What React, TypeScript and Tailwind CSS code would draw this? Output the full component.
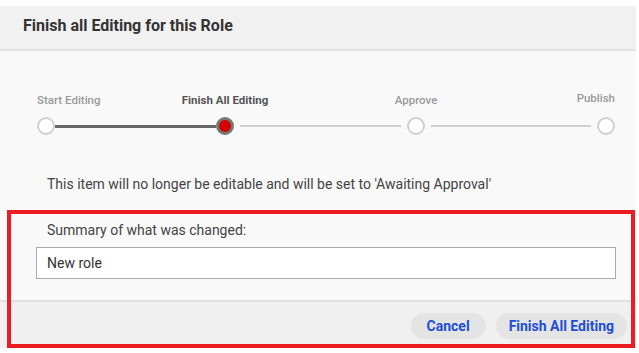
import React from 'react';

type StepState = 'done' | 'current' | 'todo';

const Dot: React.FC<{ state: StepState }> = ({ state }) => {
  if (state === 'current') {
    return <div className="w-[18px] h-[18px] shrink-0 rounded-full border-[3px] border-[#777] bg-[#d50000]" />;
  }
  return <div className="w-[18px] h-[18px] shrink-0 rounded-full border-2 border-[#cfcfcf] bg-white" />;
};

const Step: React.FC<{ label: string; state: StepState; align: string; bold?: boolean; lift?: boolean }> = ({
  label,
  state,
  align,
  bold,
  lift,
}) => (
  <div className={`w-[18px] shrink-0 flex flex-col gap-[10px] ${align}`}>
    <span
      className={`whitespace-nowrap text-[11.5px] leading-[13px] ${bold ? 'font-bold text-[#555]' : 'font-medium text-[#9a9a9a]'} ${
        lift ? '-mt-[2px] mb-[2px]' : ''
      }`}
    >
      {label}
    </span>
    <Dot state={state} />
  </div>
);

const Stepper: React.FC = () => (
  <div className="flex items-end ml-[37px]">
    <Step label="Start Editing" state="done" align="items-start" />
    <div className="w-[161px] h-[3px] mb-[7px] bg-[#666]" />
    <Step label="Finish All Editing" state="current" align="items-center" bold />
    <div className="w-[161px] h-[2px] mb-[8px] mx-[6px] bg-[#d0d0d0]" />
    <Step label="Approve" state="todo" align="items-center" />
    <div className="w-[160px] h-[2px] mb-[8px] mx-[6px] bg-[#d0d0d0]" />
    <Step label="Publish" state="todo" align="items-end" lift />
  </div>
);

export default function App() {
  return (
    <div className="relative w-[639px] h-[353px] bg-white pt-[6px] font-['Roboto',sans-serif]">
      <div className="w-[636px] h-[342px] flex flex-col bg-[#f9f9f9]">
        <div className="h-[45px] shrink-0 flex items-center px-[23px] bg-[#f1f1f1] border-b-2 border-[#e2e2e2]">
          <h1 className="text-[16px] font-bold text-[#333] -mt-[3px]">Finish all Editing for this Role</h1>
        </div>
        <div className="flex-1 flex flex-col pt-[43px]">
          <Stepper />
          <p className="mt-[39px] ml-[47px] text-[14px] leading-[20px] text-[#444]">
            This item will no longer be editable and will be set to 'Awaiting Approval'
          </p>
          <label className="mt-[26px] ml-[47px] text-[14px] leading-[20px] text-[#444]">Summary of what was changed:</label>
          <div className="mt-[7px] ml-[36px] w-[580px] h-[32px] bg-white border border-[#aaa] flex items-center px-[10px] text-[14px] text-[#333]">
            New role
          </div>
        </div>
        <div className="h-[48px] shrink-0 flex items-center justify-end gap-[10px] pr-[9px] pt-[2px] bg-[#f0f0f0] border-t-2 border-[#e0e0e0]">
          <button className="h-[26px] px-[16px] rounded-full bg-[#e4e4e4] text-[14px] font-bold text-[#1d4ed8]">Cancel</button>
          <button className="h-[26px] px-[13px] rounded-full bg-[#e4e4e4] text-[14px] font-bold text-[#1d4ed8]">Finish All Editing</button>
        </div>
      </div>
      {/* red highlight drawn over the dialog */}
      <div className="absolute left-[7px] top-[210px] w-[628px] h-[138px] border-[4px] border-[#ec1c24] pointer-events-none" />
    </div>
  );
}
